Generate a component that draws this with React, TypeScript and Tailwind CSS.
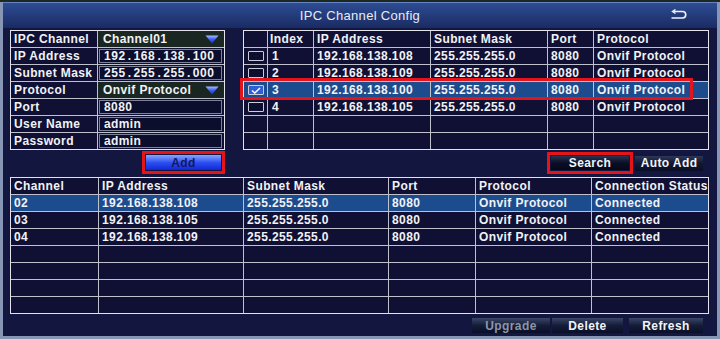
import React from "react";

const font = "font-['Liberation_Sans',Arial,sans-serif]";
const txt = "text-[12px] font-bold tracking-[0.4px] leading-[16px] text-[#f1f2f6] whitespace-nowrap overflow-hidden";

const DropArrow = () => (
  <svg width="14" height="9" viewBox="0 0 14 9">
    <defs>
      <linearGradient id="dd" x1="0" y1="0" x2="0" y2="1">
        <stop offset="0" stopColor="#a9bcff" />
        <stop offset="0.45" stopColor="#3f63f0" />
        <stop offset="1" stopColor="#1a2fc4" />
      </linearGradient>
    </defs>
    <path d="M0.5 0.5 H13.5 L7 8.5 Z" fill="url(#dd)" />
  </svg>
);

const ReturnIcon = () => (
  <svg width="18" height="11" viewBox="0 0 18 11" fill="none">
    <path d="M4 2.5 H12.5 A3.2 3.2 0 0 1 12.5 9 H1.5" stroke="#f2f4fa" strokeWidth="1.6" />
    <path d="M5.5 0.5 L2.5 2.5 L5.5 4.5" stroke="#f2f4fa" strokeWidth="1.4" />
  </svg>
);

const CheckBox = ({ checked }: { checked?: boolean }) => (
  <div
    className={`w-[16px] h-[10px] border border-[#c9cbd6] rounded-[1px] flex items-center justify-center ${
      checked ? "bg-[#2f5fd6]" : "bg-[#0d0f30]"
    }`}
  >
    {checked && (
      <svg width="10" height="7" viewBox="0 0 10 7" fill="none">
        <path d="M1 3.5 L3.8 6 L9 1" stroke="#ffffff" strokeWidth="1.5" />
      </svg>
    )}
  </div>
);

const IpText = ({ value }: { value: string }) => {
  const parts = value.split(".");
  return (
    <span className="flex items-center">
      {parts.map((p, i) => (
        <React.Fragment key={i}>
          {i > 0 && <span className="mx-[2px]">.</span>}
          <span className="tracking-[0.6px]">{p}</span>
        </React.Fragment>
      ))}
    </span>
  );
};

const Input = ({ children }: { children: React.ReactNode }) => (
  <div className="bg-[#0f1033] h-[16px] pl-[1px] pr-[2px] py-[1px]">
    <div className={`${txt} h-[14px] leading-[13px] border border-[#7d8299] bg-[#0b0e2c] pl-[4px] flex items-center`}>
      {children}
    </div>
  </div>
);

const Select = ({ value }: { value: string }) => (
  <div className={`${txt} bg-[#1a2622] h-[16px] pl-[5px] pr-[5px] flex items-center justify-between`}>
    <span>{value}</span>
    <DropArrow />
  </div>
);

const Label = ({ children }: { children: React.ReactNode }) => (
  <div className={`${txt} bg-[#0f1033] h-[16px] pl-[3px]`}>{children}</div>
);

const Btn = ({
  label,
  w,
  dim,
}: {
  label: string;
  w: string;
  dim?: boolean;
}) => (
  <div
    className={`${w} h-[15px] flex items-center justify-center text-[12px] font-bold tracking-[0.4px] bg-linear-to-b from-[#3a4766] via-[#151c38] to-[#0a0f28] ${
      dim ? "text-[#8f95a8]" : "text-[#f3f4f8]"
    }`}
  >
    {label}
  </div>
);

const searchRows = [
  { idx: "1", ip: "192.168.138.108" },
  { idx: "2", ip: "192.168.138.109" },
  { idx: "3", ip: "192.168.138.100", checked: true },
  { idx: "4", ip: "192.168.138.105" },
];

const addedRows = [
  { ch: "02", ip: "192.168.138.108", sel: true },
  { ch: "03", ip: "192.168.138.105" },
  { ch: "04", ip: "192.168.138.109" },
];

export default function App() {
  const cell = "bg-[#0f1033] h-[16px]";
  const selCell = "bg-[#1c4c8d] h-[16px]";

  return (
    <div className={`${font} w-[720px] h-[339px] overflow-hidden border-t-2 border-[#1c2820] bg-[#8796b4]`}>
      <div className="h-[337px] border-x-[3px] border-b-[3px] border-[#8796b4] bg-[#13173f] flex flex-col">
        {/* title bar */}
        <div className="relative h-[26px] border-t border-[#6684c4] bg-linear-to-b from-[#2e4d93] to-[#1a2b63] flex items-center justify-center">
          <span className="text-[13px] tracking-[0.3px] text-[#e9ebf3]">IPC Channel Config</span>
          <div className="absolute right-[29px] top-[6px]">
            <ReturnIcon />
          </div>
        </div>

        <div className="pl-[7px] pr-[9px] pt-[2px]">
          {/* top section */}
          <div className="flex">
            {/* left form */}
            <div className="w-[215px]">
              <div className="grid grid-cols-[86px_126px] gap-px bg-[#bfc1cd] border border-[#e1e2ea]">
                <Label>IPC Channel</Label>
                <Select value="Channel01" />
                <Label>IP Address</Label>
                <Input>
                  <IpText value="192.168.138.100" />
                </Input>
                <Label>Subnet Mask</Label>
                <Input>
                  <IpText value="255.255.255.000" />
                </Input>
                <Label>Protocol</Label>
                <Select value="Onvif Protocol" />
                <Label>Port</Label>
                <Input>8080</Input>
                <Label>User Name</Label>
                <Input>admin</Input>
                <Label>Password</Label>
                <Input>admin</Input>
              </div>
              <div className="pl-[132px] pt-[1px]">
                <div className="w-[83px] h-[23px] border-[3px] border-[#e3151b] p-[1px]">
                  <div className="h-[15px] flex items-center justify-center text-[12px] font-bold tracking-[0.4px] text-[#15185a] bg-linear-to-b from-[#8aa3ff] via-[#2f4ff0] to-[#0f25d6]">
                    Add
                  </div>
                </div>
              </div>
            </div>

            {/* right search table */}
            <div className="ml-[18px] w-[466px]">
              <div className="relative">
                <div className="grid grid-cols-[23px_45px_116px_116px_45px_114px] gap-px bg-[#bfc1cd] border border-[#e1e2ea]">
                  <div className={cell} />
                  <div className={`${cell} ${txt} pl-[2px]`}>Index</div>
                  <div className={`${cell} ${txt} pl-[3px]`}>IP Address</div>
                  <div className={`${cell} ${txt} pl-[3px]`}>Subnet Mask</div>
                  <div className={`${cell} ${txt} pl-[3px]`}>Port</div>
                  <div className={`${cell} ${txt} pl-[3px]`}>Protocol</div>
                  {searchRows.map((r) => {
                    const c = r.checked ? selCell : cell;
                    return (
                      <React.Fragment key={r.idx}>
                        <div className={`${c} flex items-center justify-center`}>
                          <CheckBox checked={r.checked} />
                        </div>
                        <div className={`${c} ${txt} pl-[4px]`}>{r.idx}</div>
                        <div className={`${c} ${txt} pl-[3px]`}>{r.ip}</div>
                        <div className={`${c} ${txt} pl-[3px]`}>255.255.255.0</div>
                        <div className={`${c} ${txt} pl-[3px]`}>8080</div>
                        <div className={`${c} ${txt} pl-[3px]`}>Onvif Protocol</div>
                      </React.Fragment>
                    );
                  })}
                  {[0, 1].map((i) => (
                    <React.Fragment key={i}>
                      <div className={cell} />
                      <div className={cell} />
                      <div className={cell} />
                      <div className={cell} />
                      <div className={cell} />
                      <div className={cell} />
                    </React.Fragment>
                  ))}
                </div>
                {/* annotation box over row 3 */}
                <div className="absolute left-[-3px] top-[48px] w-[453px] h-[22px] border-[3px] border-[#e3151b]" />
              </div>
              <div className="flex items-center pl-[304px] pt-[2px]">
                <div className="w-[86px] h-[22px] border-[3px] border-[#e3151b] p-[1px]">
                  <div className="h-[14px] flex items-center justify-center text-[12px] font-bold tracking-[0.4px] text-[#f3f4f8] bg-linear-to-b from-[#2a3452] via-[#0b0f26] to-[#060818]">
                    Search
                  </div>
                </div>
                <div className="ml-[2px] w-[68px] h-[15px] flex items-center justify-center text-[12px] font-bold tracking-[0.4px] text-[#f3f4f8] bg-linear-to-b from-[#2c3757] via-[#121833] to-[#0a0e26]">
                  Auto Add
                </div>
              </div>
            </div>
          </div>

          {/* added channels table */}
          <div className="mt-[3px] w-[699px] grid grid-cols-[87px_144px_144px_86px_115px_116px] gap-px bg-[#bfc1cd] border border-[#e1e2ea]">
            {["Channel", "IP Address", "Subnet Mask", "Port", "Protocol", "Connection Status"].map((h) => (
              <div key={h} className={`${cell} ${txt} pl-[3px]`}>
                {h}
              </div>
            ))}
            {addedRows.map((r) => {
              const c = r.sel ? selCell : cell;
              return (
                <React.Fragment key={r.ch}>
                  <div className={`${c} ${txt} pl-[3px]`}>{r.ch}</div>
                  <div className={`${c} ${txt} pl-[3px]`}>{r.ip}</div>
                  <div className={`${c} ${txt} pl-[3px]`}>255.255.255.0</div>
                  <div className={`${c} ${txt} pl-[3px]`}>8080</div>
                  <div className={`${c} ${txt} pl-[3px]`}>Onvif Protocol</div>
                  <div className={`${c} ${txt} pl-[3px]`}>Connected</div>
                </React.Fragment>
              );
            })}
            {[0, 1, 2, 3].map((i) => (
              <React.Fragment key={i}>
                <div className={cell} />
                <div className={cell} />
                <div className={cell} />
                <div className={cell} />
                <div className={cell} />
                <div className={cell} />
              </React.Fragment>
            ))}
          </div>

          {/* bottom buttons */}
          <div className="flex justify-end items-center pt-[4px] pr-[5px]">
            <Btn label="Upgrade" w="w-[78px]" dim />
            <div className="ml-[2px]">
              <Btn label="Delete" w="w-[71px]" />
            </div>
            <div className="ml-[6px]">
              <Btn label="Refresh" w="w-[74px]" />
            </div>
          </div>
        </div>
      </div>
    </div>
  );
}
